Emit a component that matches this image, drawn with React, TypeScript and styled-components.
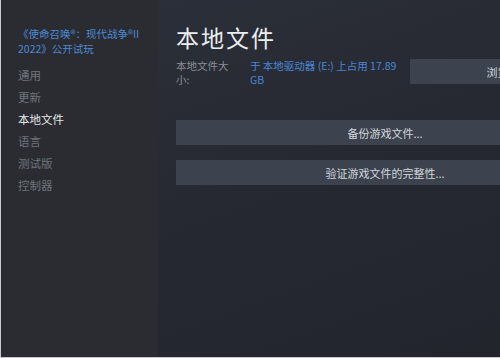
import styled, { createGlobalStyle } from "styled-components"

const GlobalStyle = createGlobalStyle`
  html, body {
    margin: 0;
    padding: 0;
    background: #2a2c31;
  }
  #root {
    width: 500px;
    height: 358px;
    overflow: hidden;
  }
`

const Frame = styled.div`
  display: flex;
  width: 500px;
  height: 358px;
  box-sizing: border-box;
  border-left: 1px solid #c9cacc;
  border-bottom: 1px solid #c9cacc;
  overflow: hidden;
  font-family: "Noto Sans CJK SC", "Noto Sans", sans-serif;
`

const Sidebar = styled.nav`
  width: 157px;
  flex-shrink: 0;
  background: #2a2c31;
  padding: 26px 0 0 17px;
  box-sizing: border-box;
`

const GameTitle = styled.div`
  color: #4a8ad8;
  font-size: 10.5px;
  line-height: 15px;
  margin-bottom: 8px;
  width: 135px;
`

const NavItem = styled.div<{ $active?: boolean }>`
  color: ${(p) => (p.$active ? "#e6e7e9" : "#70747b")};
  font-size: 11.5px;
  line-height: 22px;
`

const Main = styled.main`
  flex: 1;
  min-width: 0;
  padding: 21px 0 0 18px;
  background: linear-gradient(160deg, #2b2f39 0%, #262931 45%, #22252c 100%);
  overflow: hidden;
`

const Content = styled.div`
  width: 418px;
`

const Title = styled.h1`
  margin: 0;
  color: #eceef0;
  font-size: 23px;
  font-weight: 400;
  letter-spacing: 2px;
  line-height: 32px;
`

const InfoRow = styled.div`
  display: flex;
  align-items: flex-start;
  margin-top: 6px;
`

const Label = styled.div`
  width: 74px;
  padding-right: 20px;
  box-sizing: border-box;
  color: #8a8e95;
  font-size: 10.5px;
  line-height: 14px;
`

const Value = styled.div`
  width: 160px;
  padding-right: 8px;
  box-sizing: border-box;
  color: #4a86d6;
  font-size: 10.5px;
  line-height: 14px;
`

const Button = styled.div<{ $wide?: boolean }>`
  display: flex;
  align-items: center;
  justify-content: center;
  box-sizing: border-box;
  ${(p) => (p.$wide ? "width: 100%;" : "flex: 1;")}
  height: 25px;
  background: #3c434e;
  color: #d3d6da;
  font-size: 11px;
  border-radius: 1px;
`

const Actions = styled.div`
  display: flex;
  flex-direction: column;
  gap: 15px;
  margin-top: 33px;
`

const navItems = ["通用", "更新", "本地文件", "语言", "测试版", "控制器"]

export default function App() {
  return (
    <>
      <GlobalStyle />
      <Frame>
        <Sidebar>
          <GameTitle>《使命召唤®：现代战争®II 2022》公开试玩</GameTitle>
          {navItems.map((item) => (
            <NavItem key={item} $active={item === "本地文件"}>
              {item}
            </NavItem>
          ))}
        </Sidebar>
        <Main>
          <Content>
            <Title>本地文件</Title>
            <InfoRow>
              <Label>本地文件大小:</Label>
              <Value>于 本地驱动器 (E:) 上占用 17.89 GB</Value>
              <Button>浏览...</Button>
            </InfoRow>
            <Actions>
              <Button $wide>备份游戏文件...</Button>
              <Button $wide>验证游戏文件的完整性...</Button>
            </Actions>
          </Content>
        </Main>
      </Frame>
    </>
  )
}
